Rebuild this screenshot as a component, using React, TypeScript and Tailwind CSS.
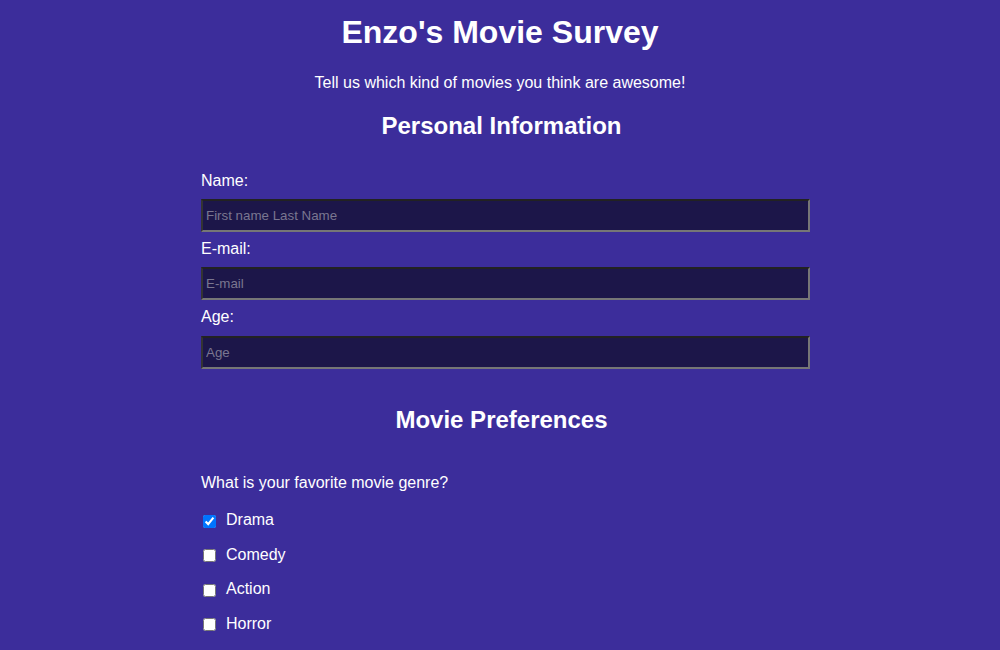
export default function App() {
  const genres = ["Drama", "Comedy", "Action", "Horror"];
  const inputCls =
    "h-[33px] w-full bg-[#1c1649] px-[3px] text-[13.33px] text-white placeholder:text-[#7a7690] border-2 border-t-[#222] border-l-[#333] border-b-[#767676] border-r-[#767676] outline-none";

  return (
    <div className="min-h-[650px] bg-[#3c2d9b] text-white font-['Liberation_Sans',Arial,sans-serif]">
      <h1 className="pt-[14px] text-center text-[32px] font-bold leading-[37px]">Enzo's Movie Survey</h1>
      <p className="mt-[23px] text-center text-base leading-[18px]">
        Tell us which kind of movies you think are awesome!
      </p>

      <form>
        <h2 className="mt-[20px] pl-[3px] text-center text-2xl font-bold leading-[28px]">Personal Information</h2>

        <div className="mt-[32px] ml-[201px] w-[609px] flex flex-col">
          <label htmlFor="name" className="leading-[18px]">Name:</label>
          <input id="name" type="text" placeholder="First name Last Name" className={`mt-[9px] ${inputCls}`} />
          <label htmlFor="email" className="mt-[8px] leading-[18px]">E-mail:</label>
          <input id="email" type="email" placeholder="E-mail" className={`mt-[9px] ${inputCls}`} />
          <label htmlFor="age" className="mt-[8px] leading-[18px]">Age:</label>
          <input id="age" type="number" placeholder="Age" className={`mt-[10px] ${inputCls}`} />
        </div>

        <h2 className="mt-[37px] pl-[3px] text-center text-2xl font-bold leading-[28px]">Movie Preferences</h2>

        <div className="ml-[201px] w-[609px]">
          <p className="mt-[40px] leading-[18px]">What is your favorite movie genre?</p>

          <div className="mt-[11px] flex flex-col">
            {genres.map((g, i) => (
              <label key={g} className="flex h-[34.5px] items-center gap-[10px] pl-[2px]">
                <input type="checkbox" defaultChecked={i === 0} className="m-0 h-[13px] w-[13px] mt-[2px]" />
                <span className="leading-[18px]">{g}</span>
              </label>
            ))}
          </div>
        </div>
      </form>
    </div>
  );
}
